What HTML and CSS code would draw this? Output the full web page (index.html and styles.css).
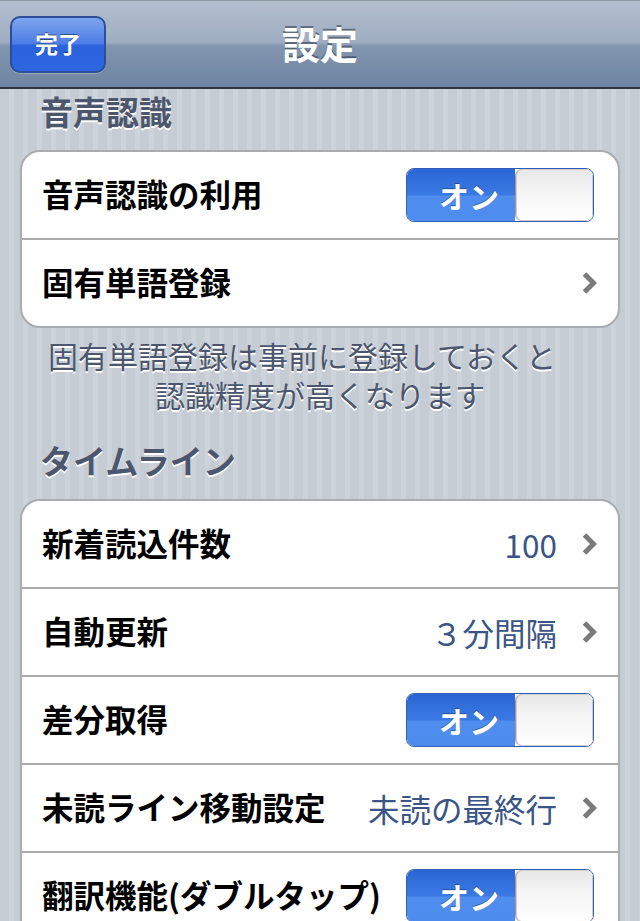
FILE: index.html
```html
<!DOCTYPE html>
<html lang="ja">
<head>
<meta charset="utf-8">
<link rel="stylesheet" href="styles.css">
</head>
<body>
<header class="navbar">
  <div class="nav-left"><button class="done">完了</button></div>
  <h1 class="title">設定</h1>
  <div class="nav-right"></div>
</header>

<main class="content">
  <h2 class="section-header first">音声認識</h2>
  <div class="group">
    <div class="row">
      <span class="label">音声認識の利用</span>
      <span class="switch"><span class="on">オン</span><span class="thumb"></span></span>
    </div>
    <div class="row">
      <span class="label">固有単語登録</span>
      <span class="accessory"><svg class="chevron" viewBox="0 0 16 24"><polyline points="3,3 12,12 3,21" /></svg></span>
    </div>
  </div>
  <div class="footer">
    <div class="footer-line shifted">固有単語登録は事前に登録しておくと</div>
    <div class="footer-line">認識精度が高くなります</div>
  </div>

  <h2 class="section-header">タイムライン</h2>
  <div class="group">
    <div class="row">
      <span class="label">新着読込件数</span>
      <span class="accessory"><span class="value">100</span><svg class="chevron" viewBox="0 0 16 24"><polyline points="3,3 12,12 3,21" /></svg></span>
    </div>
    <div class="row">
      <span class="label">自動更新</span>
      <span class="accessory"><span class="value">３分間隔</span><svg class="chevron" viewBox="0 0 16 24"><polyline points="3,3 12,12 3,21" /></svg></span>
    </div>
    <div class="row">
      <span class="label">差分取得</span>
      <span class="switch"><span class="on">オン</span><span class="thumb"></span></span>
    </div>
    <div class="row">
      <span class="label">未読ライン移動設定</span>
      <span class="accessory"><span class="value">未読の最終行</span><svg class="chevron" viewBox="0 0 16 24"><polyline points="3,3 12,12 3,21" /></svg></span>
    </div>
    <div class="row">
      <span class="label">翻訳機能(ダブルタップ)</span>
      <span class="switch"><span class="on">オン</span><span class="thumb"></span></span>
    </div>
  </div>
</main>
</body>
</html>
```

FILE: styles.css
```css
html, body {
  margin: 0;
  padding: 0;
}
body {
  width: 640px;
  height: 921px;
  overflow: hidden;
  font-family: "Noto Sans CJK JP", "Noto Sans", "Liberation Sans", sans-serif;
  background-color: #c6cdd5;
  background-image: repeating-linear-gradient(90deg, #c5ccd4 0px, #c5ccd4 9px, #ccd3da 9px, #ccd3da 14px);
}

/* Navigation bar */
.navbar {
  height: 86px;
  border-top: 1px solid #8d97a3;
  border-bottom: 2px solid #2e3641;
  box-sizing: content-box;
  display: grid;
  grid-template-columns: 1fr auto 1fr;
  align-items: center;
  background: linear-gradient(to bottom, #b3bfcf 0%, #9eadc1 48%, #8396b0 52%, #6e84a2 100%);
}
.nav-left {
  padding-left: 10px;
  display: flex;
}
.done {
  width: 96px;
  height: 57px;
  margin-top: 0;
  border: 2px solid #2c4f98;
  border-radius: 10px;
  background: linear-gradient(to bottom, #7ea4ee 0%, #4d7ee6 48%, #2a63dc 52%, #2c66e0 100%);
  color: #fff;
  font-family: inherit;
  font-size: 23px;
  font-weight: bold;
  text-shadow: 0 -1px 0 rgba(0, 0, 0, 0.45);
  padding: 0 0 2px;
  box-shadow: 0 1px 0 rgba(255, 255, 255, 0.25);
}
.title {
  margin: 0 0 3px;
  color: #fff;
  font-size: 38px;
  font-weight: bold;
  line-height: 1;
  text-shadow: 0 -2px 0 rgba(40, 50, 65, 0.55);
}

/* Content */
.content {
  display: flex;
  flex-direction: column;
}
.section-header {
  margin: 0;
  padding: 26px 40px 19px;
  font-size: 33px;
  line-height: 40px;
  font-weight: bold;
  color: #4c566c;
  text-shadow: 0 2px 0 #fff;
}
.section-header.first {
  padding-top: 2px;
  padding-bottom: 19px;
}
.group {
  margin: 0 20px;
  background: #fff;
  border: 2px solid #a8abaf;
  border-radius: 20px;
  display: flex;
  flex-direction: column;
}
.row {
  height: 86px;
  box-sizing: border-box;
  display: flex;
  align-items: center;
  justify-content: space-between;
  padding: 0 20px 4px 20px;
}
.row + .row {
  border-top: 2px solid #ababab;
  height: 88px;
}
.label {
  font-size: 31.5px;
  font-weight: bold;
  color: #000;
  white-space: nowrap;
}
.accessory {
  display: flex;
  align-items: center;
  gap: 24px;
  margin-top: 4px;
}
.value {
  font-size: 31.5px;
  color: #3a5585;
  white-space: nowrap;
}
.chevron {
  width: 17px;
  height: 24px;
  fill: none;
  stroke: #7b7b7b;
  stroke-width: 5;
  stroke-linecap: butt;
  stroke-linejoin: miter;
}

/* Switch */
.switch {
  margin-top: 4px;
  margin-right: 4px;
  width: 188px;
  height: 54px;
  display: flex;
  border-radius: 8px;
  overflow: hidden;
  border: 1px solid #2f5fb6;
  box-sizing: border-box;
}
.switch .on {
  width: 108px;
  box-sizing: border-box;
  padding-left: 16px;
  display: flex;
  align-items: center;
  justify-content: center;
  color: #fff;
  font-size: 30px;
  font-weight: bold;
  text-shadow: 0 -1px 0 rgba(0, 0, 0, 0.35);
  background: linear-gradient(to bottom, #2a66d4 0%, #3a7ae3 50%, #4f8eee 52%, #4d8cee 100%);
}
.switch .thumb {
  flex: 1;
  border-left: 1px solid #9a9a9a;
  border-radius: 7px 0 0 7px;
  background: linear-gradient(to bottom, #e7e7e7 0%, #f4f4f4 40%, #ffffff 100%);
  box-shadow: inset 0 0 0 1px #cfcfcf;
}

.footer {
  padding-top: 8px;
  display: flex;
  flex-direction: column;
  align-items: center;
  color: #4c566c;
  text-shadow: 0 2px 0 #fff;
}
.footer-line {
  font-size: 30px;
  height: 39px;
  line-height: 39px;
  white-space: nowrap;
}
.footer-line.shifted {
  margin-right: 36px;
}
```
